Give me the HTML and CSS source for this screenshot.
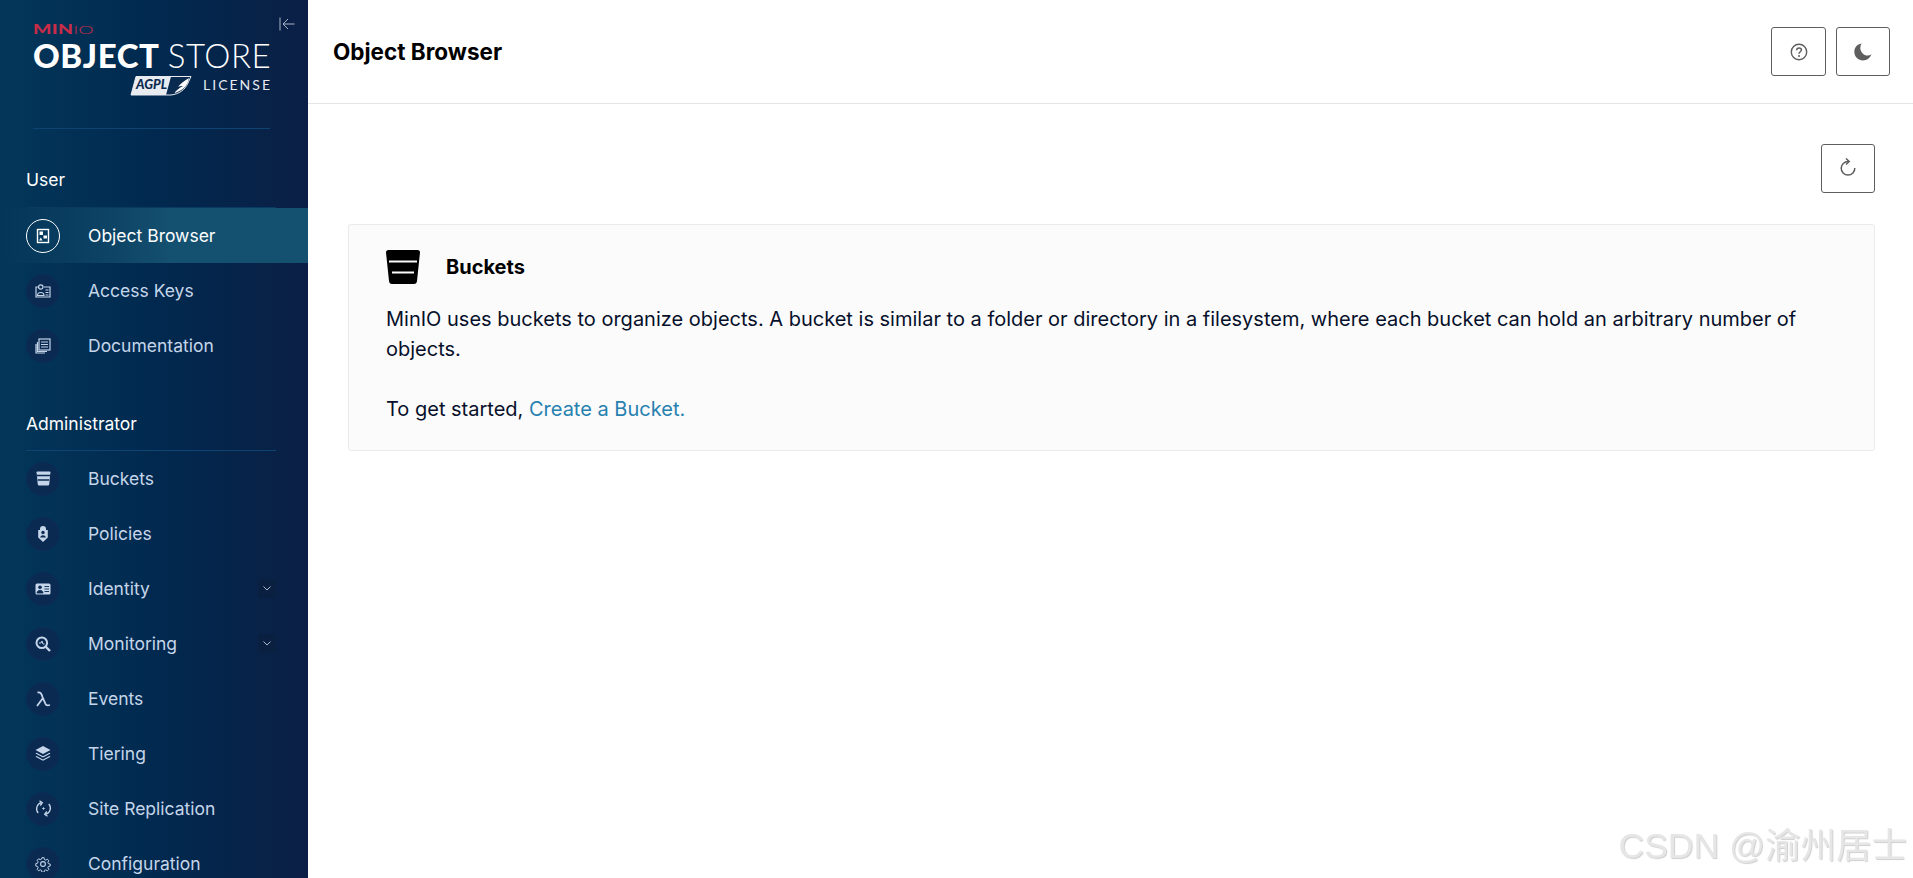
FILE: index.html
```html
<!DOCTYPE html>
<html lang="en">
<head>
<meta charset="utf-8">
<title>Object Browser</title>
<link rel="stylesheet" href="styles.css">
</head>
<body>
<div class="app">
  <aside class="sidebar">
    <div class="brand">
      <button class="collapse" aria-label="Collapse">
        <svg width="16" height="14" viewBox="0 0 16 14" fill="none" stroke="#aab4c4" stroke-width="1"><path d="M1 .5v13M15.500 7H4M9 2 4 7l5 5"/></svg>
      </button>
      <div class="logo-minio"><b>MIN</b><span>IO</span></div>
      <div class="logo-title"><b>OBJECT</b> <span>STORE</span></div>
      <div class="logo-license">
        <div class="agpl"><svg class="agpl-bg" width="62" height="21" viewBox="0 0 62 21"><path d="M6 1.500H61L58 8c-3 7-9 11-17 12H1z" fill="#0b2a50" stroke="#e6eaf0" stroke-width="1"/><path d="M6 1.500H41L36 20H1z" fill="#e8ebf0"/><path d="M44 18c3-3 5-5 9-7-2 0-4 0-5 1 2-3 6-6 11-9-1 7-6 13-15 15z" fill="#fff"/></svg><i>AGPL</i></div>
        <span>LICENSE</span>
      </div>
    </div>

    <nav class="nav">
      <h2 class="section-title first">User</h2>
      <a class="item active"><span class="ico"><svg width="16" height="16" viewBox="0 0 16 16" fill="none"><rect x="2.500" y="1.500" width="11" height="13" fill="none" stroke="#fff" stroke-width="1.400"/><rect x="4.500" y="3.500" width="3.500" height="3.500" fill="#fff"/><rect x="8.500" y="7.500" width="3.500" height="3" fill="#fff"/><path d="M4 12.500 5.800 9.500 7.500 12.500z" fill="#fff"/></svg></span><span>Object Browser</span></a>
      <a class="item"><span class="ico"><svg width="16" height="14" viewBox="0 0 16 14" fill="none" stroke="#c5d6ea" stroke-width="1.200"><path d="M3 3H1v10h14V3H9"/><circle cx="5.800" cy="3" r="2.200"/><path d="M2.500 11.500c0-4 6.500-4 6.500 0z"/><path d="M10.500 6h3M10.500 8.500h3M10.500 11h3"/></svg></span><span>Access Keys</span></a>
      <a class="item"><span class="ico"><svg width="16" height="16" viewBox="0 0 16 16" fill="none" stroke="#c5d6ea" stroke-width="1.200"><rect x="4" y="1" width="11" height="11"/><path d="M6 4h7M6 6.500h7M6 9h7" /><path d="M2.500 4v9.500H12M1 6v9h9"/></svg></span><span>Documentation</span></a>

      <h2 class="section-title">Administrator</h2>
      <a class="item"><span class="ico"><svg width="15" height="15" viewBox="0 0 15 15"><path d="M.6 1.200Q.6.500 1.300.500H13.700Q14.400.500 14.400 1.200L13.200 13.500Q13 14.500 12 14.500H3Q2 14.500 1.800 13.500z" fill="#c5d6ea"/><path d="M1 4.500H14M1.800 9H13.200" stroke="#0a2a52" stroke-width="1.300"/></svg></span><span>Buckets</span></a>
      <a class="item"><span class="ico"><svg width="12" height="16" viewBox="0 0 12 16"><path d="M3 4V3a3 3 0 0 1 6 0v1h1.800V11.500L6 16 1.200 11.500V4z" fill="#c5d6ea"/><circle cx="6" cy="6.500" r="1.700" fill="#0a2a52"/><path d="M3.200 11.500c.5-3 5.100-3 5.600 0z" fill="#0a2a52"/></svg></span><span>Policies</span></a>
      <a class="item"><span class="ico"><svg width="16" height="12" viewBox="0 0 16 12"><rect x=".5" y=".5" width="15" height="11" rx="1.500" fill="#c5d6ea"/><circle cx="5" cy="4.300" r="1.800" fill="#0a2a52"/><path d="M2 10c.2-3.500 5.800-3.500 6 0zM9.500 3.500h4.500M9.500 6h4.500M9.500 8.500h4.500" fill="#0a2a52" stroke="#0a2a52" stroke-width=".9"/></svg></span><span class="label">Identity</span><span class="chev"><svg width="8" height="5" viewBox="0 0 8 5" fill="none" stroke="#aab8cc"><path d="M.5.500 4 4 7.500.500"/></svg></span></a>
      <a class="item"><span class="ico"><svg width="16" height="16" viewBox="0 0 16 16" fill="none" stroke="#c5d6ea"><circle cx="6.800" cy="6.800" r="5.300" stroke-width="2"/><path d="M10.500 10.500 15 15" stroke-width="2.400"/><path d="M4 7h2l1-2 1 3h1.500" stroke-width="1"/></svg></span><span class="label">Monitoring</span><span class="chev"><svg width="8" height="5" viewBox="0 0 8 5" fill="none" stroke="#aab8cc"><path d="M.5.500 4 4 7.500.500"/></svg></span></a>
      <a class="item"><span class="ico"><svg width="16" height="16" viewBox="0 0 16 16" fill="none" stroke="#c5d6ea" stroke-width="1.800"><path d="M2.500 1.500C6 1 6.500 3 7.500 6L10.500 13C11 14.500 13 14.500 15 14M8 7 2 15"/></svg></span><span>Events</span></a>
      <a class="item"><span class="ico"><svg width="16" height="15" viewBox="0 0 16 15"><path d="M8 0 15.500 4 8 8 .5 4z" fill="#c5d6ea"/><path d="M1.500 6.800 8 10.300 14.500 6.800 15.500 7.500 8 11.500.5 7.500zM1.500 10 8 13.500 14.500 10 15.500 10.700 8 14.800.5 10.700z" fill="#c5d6ea"/></svg></span><span>Tiering</span></a>
      <a class="item"><span class="ico"><svg width="17" height="17" viewBox="0 0 17 17" fill="none" stroke="#c5d6ea" stroke-width="1.300"><path d="M6.500 2.700A6.300 6.300 0 0 0 3.200 13M10.500 14.300A6.300 6.300 0 0 0 13.800 4"/><path d="M4.500 .8 7.300 2.700 5.300 5.500M12.500 16.200 9.700 14.300 11.700 11.500"/><path d="M8.500 7.300v2.400M7.300 8.500h2.400" stroke-width="1"/></svg></span><span>Site Replication</span></a>
      <a class="item"><span class="ico"><svg width="16" height="16" viewBox="0 0 16 16" fill="none" stroke="#c5d6ea" stroke-width="1.100"><circle cx="8" cy="8" r="2.400"/><path d="M6.800 1h2.400l.4 2 1.500.7 1.800-1 1.600 1.700-1.100 1.700.6 1.500 2 .4v2.300l-2 .4-.6 1.500 1.100 1.700-1.600 1.600-1.800-1-1.500.6-.4 2H6.800l-.4-2-1.500-.6-1.800 1-1.600-1.600 1.100-1.700-.6-1.500-2-.4V7.500l2-.4.6-1.500L1.500 3.900 3.100 2.200l1.800 1 1.500-.7z" transform="translate(.8 .8) scale(.9)"/></svg></span><span>Configuration</span></a>
    </nav>
  </aside>

  <main class="main">
    <header class="topbar">
      <h1>Object Browser</h1>
      <div class="top-actions">
        <button class="icon-btn" aria-label="Help"><svg width="18" height="18" viewBox="0 0 18 18" fill="none" stroke="#5e5e5e"><circle cx="9" cy="9" r="7.700" stroke-width="1.400"/><path d="M6.600 7.200C6.700 5.800 7.700 5 9 5c1.400 0 2.400.9 2.400 2.100 0 1.600-2.400 1.700-2.400 3.600" stroke-width="1.500"/><circle cx="9" cy="12.900" r="1" fill="#5e5e5e" stroke="none"/></svg></button>
        <button class="icon-btn" aria-label="Dark mode"><svg width="18" height="18" viewBox="0 0 18 18"><path d="M7.500.500C3.200 1.200.300 4.700.300 8.800.300 13.700 4.300 17.500 9 17.500c3.900 0 7.200-2.500 8.500-6.200-1.200.8-2.500 1.200-3.900 1.200C9.700 12.500 6.300 8.600 6.300 5.200 6.300 3.500 6.700 1.900 7.500.500z" fill="#5e5e5e"/></svg></button>
      </div>
    </header>
    <section class="content">
      <div class="toolbar">
        <button class="icon-btn wide" aria-label="Refresh"><svg class="refresh" width="16" height="18" viewBox="0 0 16 18" fill="none" stroke="#5e5e5e" stroke-width="1.500"><path d="M8.500 3.500A6.800 6.800 0 1 0 14.800 10"/><path d="M6 .500 9.200 3.500 6 6.500"/></svg></button>
      </div>
      <div class="card">
        <div class="card-head">
          <svg width="34" height="34" viewBox="0 0 34 34"><path d="M0 2.500Q0 0 2.500 0H31.500Q34 0 34 2.500L31 31Q30.700 34 28 34H6Q3.300 34 3 31z" fill="#000"/><path d="M3 11.500H31M6 22.500H28" stroke="#fbfbfb" stroke-width="2"/></svg>
          <h3>Buckets</h3>
        </div>
        <p>MinIO uses buckets to organize objects. A bucket is similar to a folder or directory in a filesystem, where each bucket can hold an arbitrary number of objects.</p>
        <p class="cta">To get started, <a href="#">Create a Bucket.</a></p>
      </div>
    </section>
  </main>
</div>
<div class="watermark">CSDN @渝州居士</div>
</body>
</html>
```

FILE: styles.css
```css
* { box-sizing: border-box; }
html, body { margin: 0; height: 100%; overflow: hidden; }
body { font-family: Inter, "Noto Sans", sans-serif; color: #07193e; background: #fff; }
.app { display: flex; height: 878px; }

.sidebar {
  flex: 0 0 308px;
  height: 878px;
  overflow: hidden;
  color: #c5d6ea;
  background: linear-gradient(90deg, #03375a 0%, #01294f 50%, #0b1f45 100%);
}
.brand { position: relative; height: 129px; margin: 0 38px 0 33px; padding-top: 25px; border-bottom: 1px solid #0f4472; }
.collapse { position: absolute; left: 246px; top: 17px; padding: 0; border: 0; background: none; line-height: 0; }
.logo-minio { display: flex; height: 9px; font: 12.500px/9px Lato, sans-serif; color: #c72c48; transform: scaleX(1.55); transform-origin: left center; }
.logo-minio b { font-weight: 900; letter-spacing: .2px; }
.logo-minio span { font-weight: 300; }
.logo-title { margin-top: 8px; font: 33px/27px Lato, sans-serif; color: #fff; white-space: nowrap; letter-spacing: .6px; word-spacing: -1px; }
.logo-title b { font-weight: 900; }
.logo-title span { font-weight: 300; }
.logo-license { display: flex; align-items: center; justify-content: flex-end; gap: 11px; margin-top: 5px; height: 22px; }
.logo-license span { font: 14px/1 Lato, sans-serif; color: #e6eaf0; letter-spacing: 2px; margin-right: -2px; }
.agpl { position: relative; width: 62px; height: 21px; }
.agpl-bg { position: absolute; left: 0; top: 0; }
.agpl i { position: absolute; left: 6px; top: 2px; font: italic 900 13px/15px Lato, sans-serif; color: #0b2a50; }

.nav { display: flex; flex-direction: column; }
.section-title { margin: 0 32px 0 26px; font-size: 17.500px; font-weight: 400; color: #fff; border-bottom: 1px solid #0f4472; }
.section-title.first { margin-top: 40px; border-bottom-color: #083a62; height: 39px; line-height: 22px; }
.section-title:not(.first) { margin-top: 40px; height: 38px; line-height: 22px; }
.item { display: flex; align-items: center; height: 55px; padding: 0 32px 0 26px; font-size: 17.500px; color: #c5d6ea; flex: none; }
.item.active { color: #fff; background: linear-gradient(90deg, rgba(20,80,111,0) 0%, #14506f 55%, #14506f 100%); }
.ico { flex: none; display: flex; align-items: center; justify-content: center; width: 34px; height: 34px; margin-right: 28px; border-radius: 50%; background: #0a2a52; border: 1px solid #0b2c58; }
.active .ico { background: transparent; border-color: #fff; }
.label { flex: 1; }
.chev { flex: none; display: flex; align-items: center; justify-content: center; width: 18px; height: 19px; border-radius: 2px; background: #0a2040; }

.main { flex: 1; min-width: 0; }
.topbar { display: flex; align-items: center; justify-content: space-between; height: 104px; padding: 0 23px 0 25px; border-bottom: 1px solid #e5e5e5; }
.topbar h1 { margin: 0; font-size: 22.500px; font-weight: 700; color: #000; }
.top-actions { display: flex; gap: 10px; }
.icon-btn { display: flex; align-items: center; justify-content: center; width: 55px; height: 49px; padding: 0; background: #fff; border: 1px solid #5e5e5e; border-radius: 3px; }
.icon-btn + .icon-btn { width: 54px; }
.icon-btn.wide { width: 54px; }
.refresh { margin: -4px 0 0 0; }
.content { padding: 40px 38px 0 40px; }
.toolbar { display: flex; justify-content: flex-end; margin-bottom: 31px; }
.card { height: 227px; padding: 25px 37px; background: #fbfbfb; border: 1px solid #eaeaea; border-radius: 3px; }
.card-head { display: flex; align-items: center; gap: 26px; height: 34px; margin-bottom: 20px; }
.card-head h3 { margin: 0; font-size: 20px; font-weight: 700; color: #000; }
.card p { margin: 0; font-size: 20px; line-height: 30px; color: #07102a; }
.card p.cta { margin-top: 30px; }
.card a { color: #2781b0; text-decoration: none; }

.watermark {
  position: fixed; right: 6px; bottom: 10px;
  font: 35.500px/44px "Liberation Sans", "Noto Sans CJK SC", sans-serif;
  color: #e6e6e6;
  text-shadow: 1px 1px 1px #cfcfcf;
  white-space: nowrap;
}
```
